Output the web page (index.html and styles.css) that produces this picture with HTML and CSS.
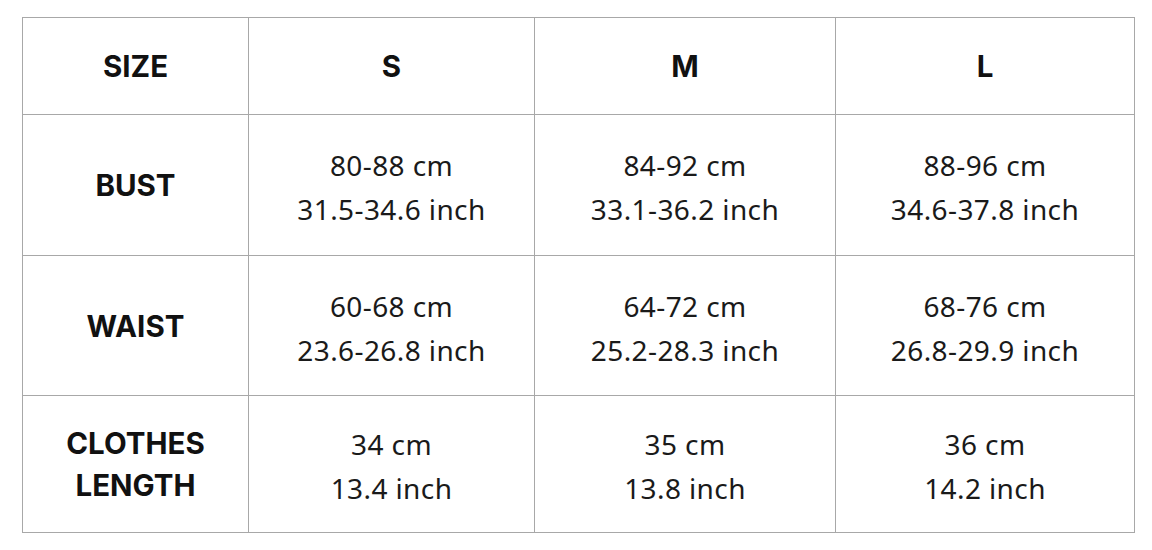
FILE: index.html
```html
<!DOCTYPE html>
<html lang="en">
<head>
<meta charset="utf-8">
<title>Size chart</title>
<link rel="stylesheet" href="styles.css">
</head>
<body>
<div class="chart">
  <div class="cell head">SIZE</div>
  <div class="cell head">S</div>
  <div class="cell head">M</div>
  <div class="cell head">L</div>

  <div class="cell head">BUST</div>
  <div class="cell val"><span>80-88 cm</span><span>31.5-34.6 inch</span></div>
  <div class="cell val"><span>84-92 cm</span><span>33.1-36.2 inch</span></div>
  <div class="cell val"><span>88-96 cm</span><span>34.6-37.8 inch</span></div>

  <div class="cell head">WAIST</div>
  <div class="cell val"><span>60-68 cm</span><span>23.6-26.8 inch</span></div>
  <div class="cell val"><span>64-72 cm</span><span>25.2-28.3 inch</span></div>
  <div class="cell val"><span>68-76 cm</span><span>26.8-29.9 inch</span></div>

  <div class="cell head"><span>CLOTHES</span><span>LENGTH</span></div>
  <div class="cell val"><span>34 cm</span><span>13.4 inch</span></div>
  <div class="cell val"><span>35 cm</span><span>13.8 inch</span></div>
  <div class="cell val"><span>36 cm</span><span>14.2 inch</span></div>
</div>
</body>
</html>
```

FILE: styles.css
```css
html, body {
  margin: 0;
  padding: 0;
  background: #ffffff;
}

.chart {
  margin: 17px 0 0 22px;
  display: grid;
  grid-template-columns: 226px 286px 301px 299px;
  grid-template-rows: 97px 141px 140px 137px;
  width: max-content;
  border-top: 1px solid #a8a8a8;
  border-left: 1px solid #a8a8a8;
  color: #1a1a1a;
}

.cell {
  box-sizing: border-box;
  border-right: 1px solid #a8a8a8;
  border-bottom: 1px solid #a8a8a8;
  display: flex;
  flex-direction: column;
  align-items: center;
  justify-content: center;
  text-align: center;
}

.head {
  font-family: Inter, "Liberation Sans", sans-serif;
  font-weight: 700;
  font-size: 29.5px;
  line-height: 42px;
  color: #111111;
}

.val {
  font-family: "Noto Sans", "Open Sans", sans-serif;
  font-weight: 400;
  font-size: 28px;
  line-height: 44px;
  letter-spacing: 0.4px;
  padding-top: 4px;
}
```
